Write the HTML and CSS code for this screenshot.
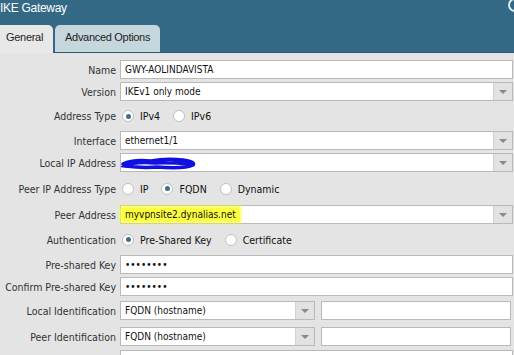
FILE: index.html
```html
<!DOCTYPE html>
<html lang="en">
  <head>
    <meta charset="UTF-8" />
    <title>IKE Gateway</title>
    <link rel="stylesheet" href="styles.css">
  </head>
  <body>
    <div class="dialog">
      <div class="header">
        <div class="title">IKE Gateway</div>
        <span class="close"></span>
        <div class="tabs">
          <div class="tab active">General</div>
          <div class="tab">Advanced Options</div>
        </div>
      </div>
      <div class="panel">
        <div class="row">
          <label>Name</label>
          <div class="field"><div class="input">GWY-AOLINDAVISTA</div></div>
        </div>
        <div class="row">
          <label>Version</label>
          <div class="field"><div class="input select">IKEv1 only mode<span class="arrow"></span></div></div>
        </div>
        <div class="row radios addr-type">
          <label>Address Type</label>
          <div class="field">
            <span class="radio on"></span><span class="opt">IPv4</span>
            <span class="radio"></span><span class="opt">IPv6</span>
          </div>
        </div>
        <div class="row">
          <label>Interface</label>
          <div class="field"><div class="input select">ethernet1/1<span class="arrow"></span></div></div>
        </div>
        <div class="row">
          <label>Local IP Address</label>
          <div class="field">
            <div class="input select">
              <svg class="scribble" width="76" height="14" viewBox="0 0 76 14">
                <path d="M2 8 C10 4 20 4 30 5 C40 3 52 3 62 4 C70 5 74 7 72 9 C66 12 50 12 36 11 C24 12 12 11 4 10 C10 7 22 6 34 7 C46 6 58 7 70 8" fill="none" stroke="#1010e0" stroke-width="3.5" stroke-linecap="round"/>
              </svg>
              <span class="arrow"></span>
            </div>
          </div>
        </div>
        <div class="row radios peer-type">
          <label>Peer IP Address Type</label>
          <div class="field">
            <span class="radio"></span><span class="opt">IP</span>
            <span class="radio on"></span><span class="opt">FQDN</span>
            <span class="radio"></span><span class="opt">Dynamic</span>
          </div>
        </div>
        <div class="row">
          <label>Peer Address</label>
          <div class="field"><div class="input select"><span class="mark">myvpnsite2.dynalias.net</span><span class="arrow"></span></div></div>
        </div>
        <div class="row radios auth">
          <label>Authentication</label>
          <div class="field">
            <span class="radio on"></span><span class="opt">Pre-Shared Key</span>
            <span class="radio"></span><span class="opt">Certificate</span>
          </div>
        </div>
        <div class="row">
          <label>Pre-shared Key</label>
          <div class="field"><div class="input dots">&#8226;&#8226;&#8226;&#8226;&#8226;&#8226;&#8226;&#8226;</div></div>
        </div>
        <div class="row">
          <label>Confirm Pre-shared Key</label>
          <div class="field"><div class="input dots">&#8226;&#8226;&#8226;&#8226;&#8226;&#8226;&#8226;&#8226;</div></div>
        </div>
        <div class="row local-id">
          <label>Local Identification</label>
          <div class="field split">
            <div class="input select short">FQDN (hostname)<span class="arrow"></span></div>
            <div class="input wide"></div>
          </div>
        </div>
        <div class="row peer-id">
          <label>Peer Identification</label>
          <div class="field split">
            <div class="input select short">FQDN (hostname)<span class="arrow"></span></div>
            <div class="input wide"></div>
          </div>
        </div>
        <div class="row last">
          <label></label>
          <div class="field"><div class="input"></div></div>
        </div>
      </div>
    </div>
  </body>
</html>
```

FILE: styles.css
```css
body {
  margin: 0;
  font-family: "DejaVu Sans Condensed", "DejaVu Sans", sans-serif;
  font-size: 10.5px;
  color: #222;
  background: #e4e4e4;
  overflow: hidden;
}
.dialog {
  width: 514px;
  height: 355px;
}
.header {
  position: relative;
  height: 53px;
  background: #336985;
  display: flex;
  flex-direction: column;
  justify-content: space-between;
  border-bottom: 1px solid #2c5870;
  box-sizing: border-box;
}
.title {
  color: #fff;
  font-family: "Liberation Sans", Arial, sans-serif;
  font-size: 12px;
  padding: 1px 0 0 0;
  letter-spacing: -0.3px;
}
.close {
  position: absolute;
  top: -2px;
  right: -8px;
  width: 10px;
  height: 10px;
  border: 2px solid #d8ecf6;
  border-radius: 50%;
}
.tabs {
  display: flex;
  gap: 2px;
  height: 27px;
}
.tab {
  font-family: "Liberation Sans", Arial, sans-serif;
  font-size: 11px;
  color: #222;
  background: #c6d6dd;
  border-radius: 5px 5px 0 0;
  padding: 6px 10px 0 10px;
  letter-spacing: -0.3px;
}
.tab.active {
  background: #e8e8e8;
  border-radius: 0 5px 0 0;
  padding: 6px 10px 0 6px;
  margin-bottom: -1px;
}
.panel {
  padding-top: 7px;
  display: flex;
  flex-direction: column;
  gap: 3px;
}
.row {
  display: grid;
  grid-template-columns: 116px 1fr;
  column-gap: 4px;
  align-items: center;
  height: 19px;
}
.row label {
  text-align: right;
  color: #333;
  white-space: nowrap;
}
.radios {
  height: 24px;
}
.peer-type {
  height: 27px;
}
.auth {
  height: 25px;
}
.local-id {
  margin-top: 2px;
}
.peer-id {
  margin-top: 4px;
}
.last {
  margin-top: 1px;
}
.field {
  display: flex;
  align-items: center;
  height: 100%;
  padding-right: 1px;
}
.input {
  flex: 1;
  position: relative;
  height: 19px;
  box-sizing: border-box;
  background: #fff;
  border: 1px solid #b9b9b9;
  font-size: 10px;
  color: #111;
  padding: 0 4px;
  line-height: 17px;
  white-space: nowrap;
}
.select {
  padding-right: 22px;
}
.arrow {
  position: absolute;
  top: 0;
  right: 0;
  width: 18px;
  height: 17px;
  background: #e2e2e2;
  border-left: 1px solid #d2d2d2;
}
.arrow::after {
  content: "";
  position: absolute;
  left: 5px;
  top: 7px;
  border-left: 4px solid transparent;
  border-right: 4px solid transparent;
  border-top: 4px solid #7f8a92;
}
.dots {
  font-size: 10px;
}
.split {
  gap: 6px;
}
.short {
  flex: 0 0 195px;
}
.wide {
  flex: 1;
  margin-right: 2px;
}
.radio {
  width: 12px;
  height: 12px;
  border: 1px solid #c0c0c0;
  border-radius: 50%;
  background: #fff;
  margin: 0 6px 0 2px;
  box-sizing: border-box;
  position: relative;
}
.radio.on::after {
  content: "";
  position: absolute;
  left: 2.5px;
  top: 2.5px;
  width: 5px;
  height: 5px;
  border-radius: 50%;
  background: #3d6f8f;
}
.opt {
  font-size: 10.5px;
  color: #111;
  margin-right: 11px;
}
.scribble {
  position: absolute;
  left: 0;
  top: 2px;
}
.mark {
  background: #fbff3c;
  box-shadow: 0 0 3px 3px #fbff3c;
  margin-left: -2px;
  padding: 0 2px;
}
```
